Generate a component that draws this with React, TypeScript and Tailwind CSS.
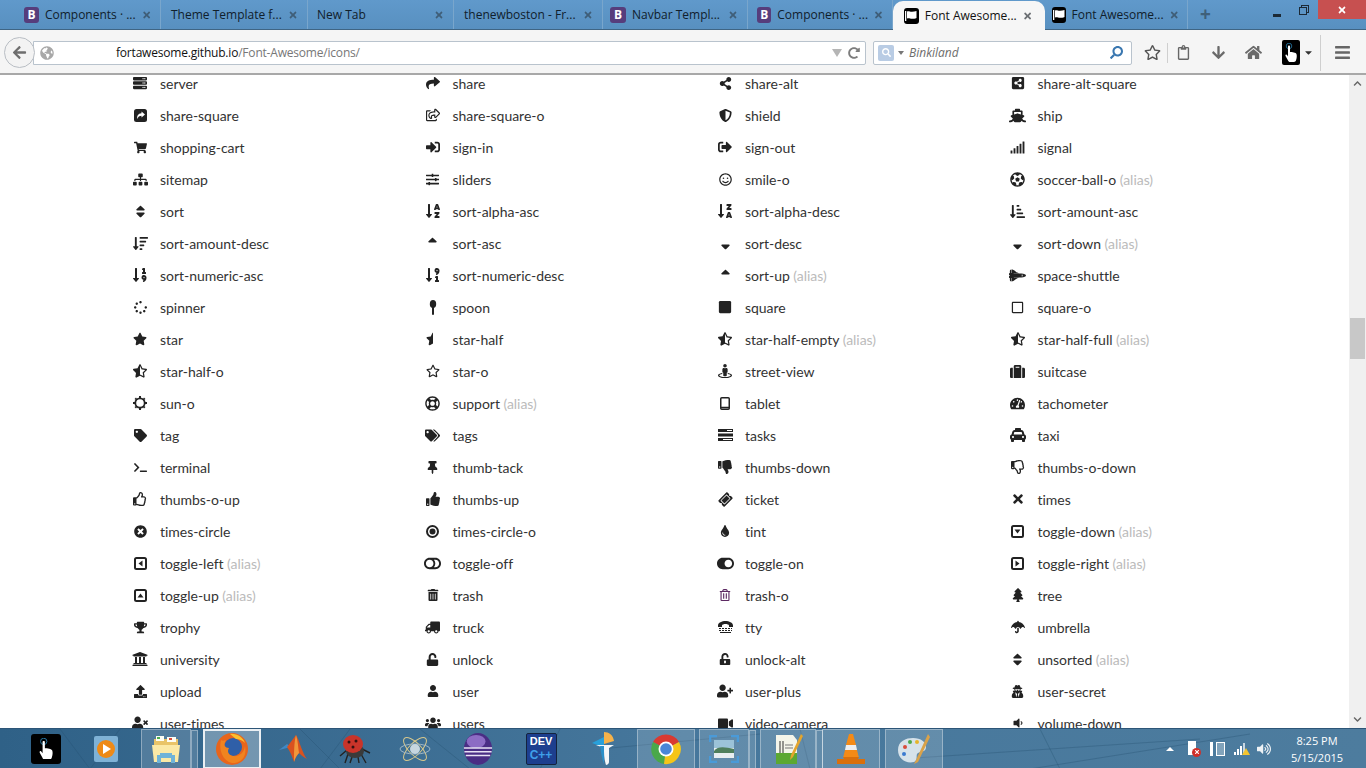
import type { ReactNode } from 'react';
import {
  FaServer, FaShare, FaShareAlt, FaShareAltSquare, FaRegShareSquare, FaShieldAlt, FaShip,
  FaShoppingCart, FaSignInAlt, FaSignOutAlt, FaSignal, FaSitemap, FaSlidersH, FaRegSmile, FaFutbol, FaSort,
  FaSortAlphaDown, FaSortAlphaDownAlt, FaSortAmountDownAlt, FaSortAmountDown, FaSortUp, FaSortDown,
  FaSortNumericDown, FaSortNumericDownAlt, FaSpaceShuttle, FaSpinner, FaSquare, FaRegSquare, FaStar, FaStarHalf,
  FaStarHalfAlt, FaRegStar, FaStreetView, FaSuitcase, FaRegLifeRing, FaTachometerAlt, FaTag,
  FaTags, FaTaxi, FaTerminal, FaThumbtack, FaThumbsDown, FaRegThumbsDown, FaRegThumbsUp, FaThumbsUp, FaTicketAlt,
  FaTimes, FaTimesCircle, FaTint, FaToggleOff, FaToggleOn, FaTrashAlt, FaRegTrashAlt, FaTree, FaTrophy, FaTruck, FaUmbrella,
  FaUniversity, FaUnlock, FaUnlockAlt, FaUpload, FaUser, FaUserPlus, FaUserSecret, FaUserTimes, FaUsers, FaVideo,
  FaVolumeDown, FaArrowLeft, FaGlobeAmericas, FaRedoAlt, FaSearch, FaArrowDown, FaHome, FaBars, FaRegClipboard, FaCaretDown, FaChevronUp, FaChevronDown, FaVolumeUp,
} from 'react-icons/fa';

function Spoon() {
  return (
    <svg width="8" height="15" viewBox="0 0 8 15" fill="currentColor">
      <ellipse cx="4" cy="4" rx="3.2" ry="4" />
      <rect x="3" y="6" width="2" height="9" rx="1" />
    </svg>
  );
}

function Tasks() {
  return (
    <svg width="15" height="12" viewBox="0 0 15 12" fill="currentColor">
      <path d="M0 0h15v3H9v-1h5V1H9v2H0zM0 4.5h15v3H0zM0 9h15v3H0zM5 10v1h9v-1z" fillRule="evenodd" />
    </svg>
  );
}

function Tty() {
  return (
    <svg width="15" height="12" viewBox="0 0 15 12" fill="currentColor">
      <path d="M0 4.5C0 1.5 4 0 7.5 0S15 1.500 15 4.500V6h-4V4.500C11 3.500 9 3 7.500 3S4 3.500 4 4.500V6H0z" />
      <path d="M1 7h2v1H1zM4 7h2v1H4zM7 7h2v1H7zM10 7h2v1h-2zM13 7h1v1h-1zM1 9h2v1H1zM4 9h2v1H4zM7 9h2v1H7zM10 9h2v1h-2zM13 9h1v1h-1zM2 11h11v1H2z" />
    </svg>
  );
}

function ShareSquare() {
  return (
    <svg width="13" height="13" viewBox="0 0 13 13">
      <rect width="13" height="13" rx="2.500" fill="currentColor" />
      <path d="M7.500 2.500 11 5.500 7.500 8.500V6.800C5.500 6.800 4 7.500 3.500 10 2.500 7 4 4.500 7.500 4.200z" fill="white" />
    </svg>
  );
}

function SunO() {
  return (
    <svg width="14" height="14" viewBox="0 0 14 14" fill="currentColor">
      <circle cx="7" cy="7" r="4.700" fill="none" stroke="currentColor" strokeWidth="1.800" />
      <path d="M6 0h2v2H6zM6 12h2v2H6zM0 6h2v2H0zM12 6h2v2h-2zM1.500 3 3 1.500 4 3 3 4zM10 3l1-1.500L12.500 3 11 4zM1.500 11 3 10l1 1-1 1.500zM10 11l1-1 1.500 1-1.500 1.500z" />
    </svg>
  );
}

function Tablet() {
  return (
    <svg width="10" height="13" viewBox="0 0 10 13" fill="none" stroke="currentColor" strokeWidth="1.500">
      <rect x="0.750" y="0.750" width="8.500" height="11.500" rx="1" />
      <path d="M1 10.500h8" />
    </svg>
  );
}

function TimesCircleO() {
  return (
    <svg width="13" height="13" viewBox="0 0 13 13">
      <circle cx="6.500" cy="6.500" r="5.500" fill="none" stroke="currentColor" strokeWidth="2" />
      <circle cx="6.500" cy="6.500" r="3" fill="currentColor" />
    </svg>
  );
}

function Toggle({ d }: { d: string }) {
  return (
    <svg width="13" height="13" viewBox="0 0 13 13">
      <rect x="1" y="1" width="11" height="11" rx="1.500" fill="none" stroke="currentColor" strokeWidth="2" />
      <path d={d} fill="currentColor" />
    </svg>
  );
}

type Cell = { name: string; icon: ReactNode; alias?: boolean };

const c = (name: string, icon: ReactNode, alias?: boolean): Cell => ({ name, icon, alias });

const rows: Cell[][] = [
  [c('server', <FaServer size={14} />), c('share', <FaShare size={14} />), c('share-alt', <FaShareAlt size={13} />), c('share-alt-square', <FaShareAltSquare size={14} />)],
  [c('share-square', <ShareSquare />), c('share-square-o', <FaRegShareSquare size={14} />), c('shield', <FaShieldAlt size={13} />), c('ship', <FaShip size={17} />)],
  [c('shopping-cart', <FaShoppingCart size={13} />), c('sign-in', <FaSignInAlt size={14} />), c('sign-out', <FaSignOutAlt size={14} />), c('signal', <FaSignal size={15} />)],
  [c('sitemap', <FaSitemap size={15} />), c('sliders', <FaSlidersH size={13} />), c('smile-o', <FaRegSmile size={13} />), c('soccer-ball-o', <FaFutbol size={15} />, true)],
  [c('sort', <FaSort size={15} />), c('sort-alpha-asc', <FaSortAlphaDown size={16} />), c('sort-alpha-desc', <FaSortAlphaDownAlt size={16} />), c('sort-amount-asc', <FaSortAmountDownAlt size={15} />)],
  [c('sort-amount-desc', <FaSortAmountDown size={15} />), c('sort-asc', <FaSortUp size={15} />), c('sort-desc', <FaSortDown size={15} />), c('sort-down', <FaSortDown size={15} />, true)],
  [c('sort-numeric-asc', <FaSortNumericDown size={16} />), c('sort-numeric-desc', <FaSortNumericDownAlt size={16} />), c('sort-up', <FaSortUp size={15} />, true), c('space-shuttle', <FaSpaceShuttle size={17} />)],
  [c('spinner', <FaSpinner size={13} />), c('spoon', <Spoon />), c('square', <FaSquare size={14} />), c('square-o', <FaRegSquare size={13} />)],
  [c('star', <FaStar size={14} />), c('star-half', <FaStarHalf size={14} />), c('star-half-empty', <FaStarHalfAlt size={14} />, true), c('star-half-full', <FaStarHalfAlt size={14} />, true)],
  [c('star-half-o', <FaStarHalfAlt size={14} />), c('star-o', <FaRegStar size={14} />), c('street-view', <FaStreetView size={14} />), c('suitcase', <FaSuitcase size={15} />)],
  [c('sun-o', <SunO />), c('support', <FaRegLifeRing size={15} />, true), c('tablet', <Tablet />), c('tachometer', <FaTachometerAlt size={15} />)],
  [c('tag', <FaTag size={13} />), c('tags', <FaTags size={15} />), c('tasks', <Tasks />), c('taxi', <FaTaxi size={16} />)],
  [c('terminal', <FaTerminal size={13} />), c('thumb-tack', <FaThumbtack size={13} />), c('thumbs-down', <FaThumbsDown size={14} />), c('thumbs-o-down', <FaRegThumbsDown size={14} />)],
  [c('thumbs-o-up', <FaRegThumbsUp size={14} />), c('thumbs-up', <FaThumbsUp size={14} />), c('ticket', <FaTicketAlt size={13} className="-rotate-45" />), c('times', <FaTimes size={14} />)],
  [c('times-circle', <FaTimesCircle size={13} />), c('times-circle-o', <TimesCircleO />), c('tint', <FaTint size={12} />), c('toggle-down', <Toggle d="M3.500 4.500h6l-3 4z" />, true)],
  [c('toggle-left', <Toggle d="M8.500 3.500v6l-4-3z" />, true), c('toggle-off', <FaToggleOff size={17} />), c('toggle-on', <FaToggleOn size={17} />), c('toggle-right', <Toggle d="M4.500 3.500v6l4-3z" />, true)],
  [c('toggle-up', <Toggle d="M3.500 8.500h6l-3-4z" />, true), c('trash', <FaTrashAlt size={12} />), c('trash-o', <FaRegTrashAlt size={12} className="text-[#5d2a63]" />), c('tree', <FaTree size={14} />)],
  [c('trophy', <FaTrophy size={13} />), c('truck', <FaTruck size={15} className="-scale-x-100" />), c('tty', <Tty />), c('umbrella', <FaUmbrella size={14} />)],
  [c('university', <FaUniversity size={16} />), c('unlock', <FaUnlock size={13} />), c('unlock-alt', <FaUnlockAlt size={12} />), c('unsorted', <FaSort size={15} />, true)],
  [c('upload', <FaUpload size={13} />), c('user', <FaUser size={12} />), c('user-plus', <FaUserPlus size={16} />), c('user-secret', <FaUserSecret size={13} />)],
  [c('user-times', <FaUserTimes size={16} />), c('users', <FaUsers size={16} />), c('video-camera', <FaVideo size={15} />), c('volume-down', <FaVolumeDown size={12} />)],
];

const BootstrapIcon = () => (
  <span className="flex h-4 w-4 items-center justify-center rounded-[3px] bg-[#563d7c] text-[12px] font-bold leading-none text-white">B</span>
);

const FlagIcon = () => (
  <span className="flex h-4 w-4 items-center justify-center rounded-[3px] bg-black">
    <svg width="12" height="10" viewBox="0 0 12 10" fill="white">
      <path d="M0 0h1.300v10H0zM2 .5c2-.8 3 .5 5 .3 1.500-.1 3-.3 4.500-.8v7c-1.500.8-3 .8-4.500.8-2 0-3-1-5-.3z" />
    </svg>
  </span>
);

type Tab = { title: string; icon?: ReactNode; width: string; pad: string };

const tabs: Tab[] = [
  { title: 'Components · ...', icon: <BootstrapIcon />, width: 'w-[147px]', pad: 'pl-[10px]' },
  { title: 'Theme Template f...', width: 'w-[147px]', pad: 'pl-[10px]' },
  { title: 'New Tab', width: 'w-[146px]', pad: 'pl-[9px]' },
  { title: 'thenewboston - Fr...', width: 'w-[149px]', pad: 'pl-[10px]' },
  { title: 'Navbar Templ...', icon: <BootstrapIcon />, width: 'w-[145px]', pad: 'pl-[7px]' },
];

function TabClose({ dark }: { dark?: boolean }) {
  return <FaTimes size={10} className={dark ? 'text-[#6b6f73]' : 'text-[#3f5e78]'} />;
}

function TabBar() {
  return (
    <div className="flex h-[30px] items-end border-b border-[#3f6584] bg-gradient-to-b from-[#6099cb] to-[#5890c0] pl-[14px]">
      {tabs.map((tab) => (
        <div key={tab.title} className={`flex h-[29px] items-center gap-[6px] border-r border-[#79a6cc] pr-[9px] pt-[1px] text-[12px] text-[#10202c] ${tab.width} ${tab.pad}`}>
          {tab.icon}
          <span className="flex-1 whitespace-nowrap">{tab.title}</span>
          <TabClose />
        </div>
      ))}
      <div className="flex h-[29px] w-[145px] items-center gap-[6px] border-r border-[#79a6cc] pl-[9px] pr-[9px] pt-[1px] text-[12px] text-[#10202c]">
        <BootstrapIcon />
        <span className="flex-1 whitespace-nowrap">Components · ...</span>
        <TabClose />
      </div>
      <div className="relative z-10 mb-[-1px] flex h-[29px] w-[152px] items-center gap-[6px] rounded-t-[10px] bg-[#f6f6f6] pl-[11px] pr-[13px] pt-[1px] text-[12px] text-[#111]">
        <FlagIcon />
        <span className="flex-1 whitespace-nowrap">Font Awesome...</span>
        <TabClose dark />
      </div>
      <div className="flex h-[29px] w-[143px] items-center gap-[6px] border-r border-[#79a6cc] pl-[7px] pr-[9px] pt-[1px] text-[12px] text-[#10202c]">
        <FlagIcon />
        <span className="flex-1 whitespace-nowrap">Font Awesome...</span>
        <TabClose />
      </div>
      <div className="flex h-[29px] items-center pl-[12px] text-[19px] font-bold leading-none text-[#3f6079]">+</div>
      <div className="ml-auto flex h-[30px] items-start self-start">
        <div className="mt-[14px] mr-[18px] h-[3px] w-[8px] bg-[#1c2a36]" />
        <div className="relative mt-[5px] mr-[9px] h-[10px] w-[10px]">
          <div className="absolute right-0 top-0 h-[8px] w-[8px] border border-[#1c2a36]" />
          <div className="absolute bottom-0 left-0 h-[8px] w-[8px] border border-[#1c2a36] bg-[#5c95c6]" />
        </div>
        <div className="flex h-[19px] w-[48px] items-center justify-center bg-[#c75050]">
          <FaTimes size={10} className="text-white" />
        </div>
      </div>
    </div>
  );
}

function NavBar() {
  return (
    <div className="flex h-[45px] items-center border-b-2 border-[#a8a8a8] bg-[#f5f5f5] pl-[4px] pt-[2px]">
      <div className="relative z-10 flex h-[31px] w-[31px] items-center justify-center rounded-full border border-[#b9bec4] bg-[#f3f3f3]">
        <FaArrowLeft size={15} className="text-[#6e6e6e]" />
      </div>
      <div className="-ml-[2px] flex h-[24px] w-[833px] items-center rounded-r-[2px] border border-[#b9c3cd] bg-white pl-[6px] pr-[4px]">
        <FaGlobeAmericas size={14} className="text-[#a8a8a8]" />
        <span className="ml-[62px] flex-1 text-[12px] tracking-[-0.2px] text-[#111]">
          fortawesome.github.io<span className="text-[#777]">/Font-Awesome/icons/</span>
        </span>
        <span className="mr-[6px] h-0 w-0 border-x-[5px] border-t-[8px] border-x-transparent border-t-[#b5b5b5]" />
        <FaRedoAlt size={12} className="mr-[1px] text-[#7d7d7d]" />
      </div>
      <div className="ml-[7px] flex h-[24px] w-[259px] items-center rounded-[2px] border border-[#b9c3cd] bg-white pr-[8px]">
        <div className="ml-[4px] flex h-[16px] w-[16px] items-center justify-center rounded-[2px] bg-[#b9cce4]">
          <FaSearch size={9} className="text-white" />
        </div>
        <span className="ml-[4px] h-0 w-0 border-x-[3px] border-t-[4px] border-x-transparent border-t-[#777]" />
        <span className="ml-[5px] flex-1 text-[12px] italic text-[#6d6d6d]">Binkiland</span>
        <FaSearch size={13} className="-scale-x-100 text-[#3a77b0]" />
      </div>
      <FaRegStar size={17} className="ml-[12px] text-[#555]" />
      <div className="ml-[6px] h-[20px] w-px bg-[#cfcfcf]" />
      <FaRegClipboard size={15} className="ml-[8px] text-[#666]" />
      <FaArrowDown size={15} className="ml-[20px] text-[#6a6a6a]" />
      <FaHome size={17} className="ml-[19px] text-[#6a6a6a]" />
      <div className="ml-[20px] flex h-[25px] w-[18px] items-center justify-center rounded-[2px] bg-black">
        <HandGlyph size={14} />
      </div>
      <FaCaretDown size={11} className="ml-[3px] text-[#333]" />
      <div className="ml-[6px] h-[36px] w-px bg-[#cfcfcf]" />
      <FaBars size={17} className="ml-[13px] text-[#666]" />
    </div>
  );
}

function HandGlyph({ size }: { size: number }) {
  return (
    <svg width={size} height={size * 1.35} viewBox="0 0 14 19" fill="white">
      <circle cx="5" cy="3" r="2.800" fill="none" stroke="#2a80b0" strokeWidth="0.8" />
      <path d="M4 3.500c0-1.200 2-1.200 2 0V9c2 0 6 .5 6.500 2s.5 4-.5 6.500c-.3.800-1 1.500-2 1.500H6c-1 0-1.500-.5-2-1.500L1.500 13c-.5-1.500 1-2 1.500-1l1 1.500z" />
    </svg>
  );
}

function Scrollbar() {
  return (
    <div className="flex w-[17px] shrink-0 flex-col items-center bg-[#f0f0f0]">
      <div className="flex h-[17px] items-center justify-center">
        <FaChevronUp size={9} className="text-[#666]" />
      </div>
      <div className="h-[226px]" />
      <div className="h-[41px] w-[15px] bg-[#c8c8c8]" />
      <div className="flex-1" />
      <div className="flex h-[17px] items-center justify-center">
        <FaChevronDown size={9} className="text-[#666]" />
      </div>
    </div>
  );
}

function IconGrid() {
  return (
    <div className="min-w-0 flex-1 overflow-hidden bg-white">
      <div className="-mt-[8px] pl-[128px] font-['Lato',sans-serif] text-[14px] tracking-[-0.03px] text-[#333]">
        {rows.map((row) => (
          <div key={row[0].name} className="grid h-[32px] grid-cols-[292.5px_292.5px_292.5px_292.5px] items-center">
            {row.map((cell) => (
              <div key={cell.name} className="flex items-center">
                <span className="flex w-[24px] justify-center text-[#222]">{cell.icon}</span>
                <span className="ml-[8px] whitespace-nowrap">
                  {cell.name}
                  {cell.alias && <span className="text-[#bbb]"> (alias)</span>}
                </span>
              </div>
            ))}
          </div>
        ))}
      </div>
    </div>
  );
}

const Firefox = () => (
  <svg width="34" height="34" viewBox="0 0 34 34">
    <circle cx="17" cy="17" r="16" fill="#e8651c" />
    <circle cx="18" cy="15" r="9" fill="#2f5fa8" />
    <path d="M6 8C3 20 10 32 20 31c8-1 12-9 10-17-1 7-6 11-12 10-5-1-6-5-4-8-4 0-6-3-3-8C9 9 7 9 6 8z" fill="#f0841f" />
    <path d="M15 2c6-1 13 3 15 9-3-3-6-4-9-4-2-2-4-3-6-5z" fill="#fbc02d" />
  </svg>
);

const Chrome = () => (
  <svg width="32" height="32" viewBox="0 0 32 32">
    <path d="M16 16 3 9A15 15 0 0 1 29 9z" fill="#d93a32" />
    <path d="M16 16 3 9a15 15 0 0 0 11 22z" fill="#4aa84a" />
    <path d="M16 16 29 9a15 15 0 0 1-15 22z" fill="#f5c518" />
    <circle cx="16" cy="16" r="7.500" fill="white" />
    <circle cx="16" cy="16" r="5.800" fill="#4a86d8" />
  </svg>
);

function TaskSlot({ width, children, boxed, active, stack }: { width: string; children: ReactNode; boxed?: boolean; active?: boolean; stack?: boolean }) {
  const look = active
    ? 'border-2 border-white/85 bg-white/30'
    : boxed
      ? 'border border-white/35 bg-white/15'
      : '';
  return (
    <div className={`relative flex h-[40px] shrink-0 items-center justify-center ${width} ${look}`}>
      {children}
      {stack && <div className="absolute -right-[8px] top-0 h-[40px] w-[7px] border border-white/35 bg-white/15" />}
    </div>
  );
}

function Taskbar() {
  return (
    <div className="relative flex h-[40px] shrink-0 items-center overflow-hidden border-t border-[#2d5577] bg-gradient-to-r from-[#2f6187] via-[#46779c] to-[#4d7c9e] pl-[16px]">
      <svg className="absolute inset-0" width="1366" height="40" fill="none" stroke="#24506f" strokeOpacity="0.35">
        <path d="M60 0 90 40M120 0l-30 40M300 0l40 40M350 0l-30 40M420 0l50 40M560 0l-20 40M600 20 760 5M1040 0l20 40M1030 40l220-35M800 0l10 40M900 30l300-20" />
      </svg>
      <div className="relative flex items-center">
        <TaskSlot width="w-[60px]">
          <div className="flex h-[30px] w-[30px] items-center justify-center rounded-[3px] bg-black">
            <HandGlyph size={16} />
          </div>
        </TaskSlot>
        <TaskSlot width="w-[59px]">
          <div className="flex h-[26px] w-[24px] items-center justify-center rounded-[2px] bg-[#7fb2d6]">
            <div className="flex h-[18px] w-[18px] items-center justify-center rounded-full bg-[#ee8a16]">
              <div className="ml-[2px] h-0 w-0 border-y-[5px] border-l-[8px] border-y-transparent border-l-white" />
            </div>
          </div>
        </TaskSlot>
        <div className="w-[6px]" />
        <TaskSlot width="w-[50px]" boxed stack>
          <svg width="30" height="30" viewBox="0 0 30 30">
            <path d="M3 5h24v10H3z" fill="#e9c468" />
            <path d="M5 2h8v5H5z" fill="#fdfdf4" />
            <path d="M6 3h3v2H6z" fill="#4caf50" />
            <path d="M16 3h9v5h-9z" fill="#fdfdf4" />
            <path d="M18 4h3v2h-3z" fill="#d84c3c" />
            <path d="M1 11h28l-2 17H3z" fill="#fbe9a6" />
            <path d="M9 19h12v2h3v8h-4v-5H10v5H6v-8h3z" fill="#6fb3d8" />
          </svg>
        </TaskSlot>
        <div className="w-[12px]" />
        <TaskSlot width="w-[58px]" active>
          <Firefox />
        </TaskSlot>
        <TaskSlot width="w-[64px]">
          <svg width="30" height="28" viewBox="0 0 30 28">
            <path d="M1 15 9 9l4 3z" fill="#3f88c5" />
            <path d="M9 12 18 0c3 4 6 18 11 24-4-2-6-4-8-6-2 2-4 5-5 9-2-6-4-11-7-15z" fill="#d9521f" />
            <path d="M18 0c2 6 2 12 3 18-2 2-4 5-5 9 0-8 0-20 2-27z" fill="#f0973a" />
          </svg>
        </TaskSlot>
        <TaskSlot width="w-[60px]">
          <svg width="32" height="30" viewBox="0 0 32 30">
            <path d="M8 16 1 22M9 20l-3 9M23 15l8 4M22 20l5 9M19 23l1 6M13 23l-2 6" stroke="#222" strokeWidth="1.400" fill="none" />
            <ellipse cx="16" cy="17" rx="9" ry="7" fill="#3a3a3a" />
            <ellipse cx="14" cy="10" rx="10" ry="9" fill="#c9342a" />
            <circle cx="10" cy="8" r="1.500" fill="#311" />
            <circle cx="17" cy="7" r="1.500" fill="#311" />
            <circle cx="14" cy="13" r="1.500" fill="#311" />
          </svg>
        </TaskSlot>
        <TaskSlot width="w-[60px]">
          <svg width="32" height="32" viewBox="0 0 32 32" fill="none" stroke="#d8c88c" strokeWidth="1">
            <ellipse cx="16" cy="16" rx="15" ry="6" transform="rotate(45 16 16)" />
            <ellipse cx="16" cy="16" rx="15" ry="6" transform="rotate(-45 16 16)" />
            <ellipse cx="16" cy="16" rx="15" ry="5" stroke="#9fb6c6" />
            <circle cx="16" cy="16" r="5" fill="#c7d6df" stroke="none" />
          </svg>
        </TaskSlot>
        <TaskSlot width="w-[65px]">
          <svg width="30" height="36" viewBox="0 0 32 36">
            <ellipse cx="16" cy="18" rx="15" ry="17" fill="#4a2d84" />
            <ellipse cx="14" cy="10" rx="10" ry="7" fill="#8c6cc4" />
            <path d="M1 17h30M1.500 21h29M3 25h26" stroke="#e8e2f4" strokeWidth="1.600" />
          </svg>
        </TaskSlot>
        <TaskSlot width="w-[62px]">
          <div className="flex h-[32px] w-[31px] flex-col items-center justify-center rounded-[2px] border border-[#14233e] bg-[#1d3f8f] font-['Liberation_Sans',sans-serif] font-bold leading-none">
            <span className="text-[11px] text-white">DEV</span>
            <span className="mt-[2px] text-[12px] text-[#3fa0ea]">C++</span>
          </div>
        </TaskSlot>
        <TaskSlot width="w-[63px]">
          <svg width="26" height="34" viewBox="0 0 26 34">
            <path d="M13 0c5 0 9 3 10 9l-10 3z" fill="#f6b24a" />
            <path d="M1 11 13 5v9l-4 0z" fill="#29a0da" />
            <path d="M5 13h18l-5 3v14c0 2-2 3-3 3-2-6-2-12-2-17z" fill="#f3f6f8" />
            <path d="M9 14h4v18c-2-5-3-12-4-18z" fill="#2a8fc8" />
          </svg>
        </TaskSlot>
        <div className="w-[2px]" />
        <TaskSlot width="w-[58px]" boxed>
          <Chrome />
        </TaskSlot>
        <div className="w-[4px]" />
        <TaskSlot width="w-[50px]" boxed stack>
          <svg width="30" height="28" viewBox="0 0 30 28">
            <path d="M5 5h20v18H5z" fill="#e8eef0" />
            <path d="M5 5h20v8H5z" fill="#9cc3d8" />
            <path d="M5 16c4-5 10-4 20-2v4H5z" fill="#4f7f5c" />
            <path d="M1 7V1h7M22 1h7v6M29 21v6h-7M8 27H1v-6" fill="none" stroke="#4a9ad8" strokeWidth="2.500" />
          </svg>
        </TaskSlot>
        <div className="w-[11px]" />
        <TaskSlot width="w-[56px]" boxed stack>
          <svg width="30" height="32" viewBox="0 0 30 32">
            <path d="M3 2h17l4 5v24H3z" fill="#f4f5ea" />
            <path d="M3 20h21v11H3z" fill="#5ca832" />
            <path d="M7 8v12M10 8v12" stroke="#333" strokeWidth="1" />
            <path d="M12 12h8M12 15h8" stroke="#777" strokeWidth="1" />
            <path d="M28 1 18 22l-1 5 3-3L30 3z" fill="#e5a52c" />
          </svg>
        </TaskSlot>
        <div className="w-[6px]" />
        <TaskSlot width="w-[58px]" boxed>
          <svg width="30" height="32" viewBox="0 0 30 32">
            <path d="M13 1h4l3 11H10z" fill="#f48a16" />
            <path d="M10 12h10l1 5H9z" fill="#eee" />
            <path d="M9 17h12l2 8H7z" fill="#f48a16" />
            <path d="M1 26h7l-1-2h16l-1 2h7v5H1z" fill="#d96f0c" />
          </svg>
        </TaskSlot>
        <div className="w-[5px]" />
        <TaskSlot width="w-[58px]" boxed>
          <svg width="34" height="32" viewBox="0 0 34 32">
            <path d="M1 17C1 8 9 5 16 5c8 0 13 4 13 9 0 6-7 4-9 7-1 3 1 6-3 8C9 31 1 26 1 17z" fill="#d6e2ea" />
            <circle cx="8" cy="14" r="2" fill="#d84c3c" />
            <circle cx="13" cy="9" r="2" fill="#4ca84c" />
            <circle cx="20" cy="9" r="2" fill="#e5b52c" />
            <circle cx="7" cy="21" r="2" fill="#3a7ad0" />
            <path d="M31 1 19 27l-2 4 4-2L33 4z" fill="#d9a24a" />
          </svg>
        </TaskSlot>
      </div>
      <div className="relative ml-auto flex items-center text-white">
        <span className="h-0 w-0 border-x-[4px] border-b-[4px] border-x-transparent border-b-white" />
        <div className="relative ml-[13px] h-[16px] w-[14px]">
          <div className="ml-[1px] h-[14px] w-[8px] bg-white" />
          <div className="absolute bottom-0 right-0 flex h-[9px] w-[9px] items-center justify-center rounded-full bg-[#d0302a]">
            <FaTimes size={6} />
          </div>
        </div>
        <div className="ml-[9px] flex h-[16px] w-[15px] items-center justify-between">
          <span className="h-[14px] w-[3px] bg-white" />
          <span className="h-[14px] w-[9px] border border-white bg-white/30" />
        </div>
        <div className="relative ml-[9px] flex h-[13px] w-[16px] items-end gap-[1px]">
          <span className="h-[3px] w-[2px] bg-white" />
          <span className="h-[6px] w-[2px] bg-white" />
          <span className="h-[9px] w-[2px] bg-white" />
          <span className="h-[12px] w-[2px] bg-white/70" />
          <span className="absolute bottom-0 right-0 h-0 w-0 border-x-[4px] border-b-[7px] border-x-transparent border-b-[#f4c430]" />
        </div>
        <FaVolumeUp size={14} className="ml-[7px] text-white/90" />
        <div className="ml-[10px] mr-[13px] flex w-[72px] flex-col items-center text-[11px] leading-[17px]">
          <span>8:25 PM</span>
          <span>5/15/2015</span>
        </div>
      </div>
    </div>
  );
}

export default function App() {
  return (
    <div className="flex h-screen w-full flex-col overflow-hidden bg-white font-['Open_Sans',sans-serif]">
      <TabBar />
      <NavBar />
      <div className="flex min-h-0 flex-1">
        <IconGrid />
        <Scrollbar />
      </div>
      <Taskbar />
    </div>
  );
}
